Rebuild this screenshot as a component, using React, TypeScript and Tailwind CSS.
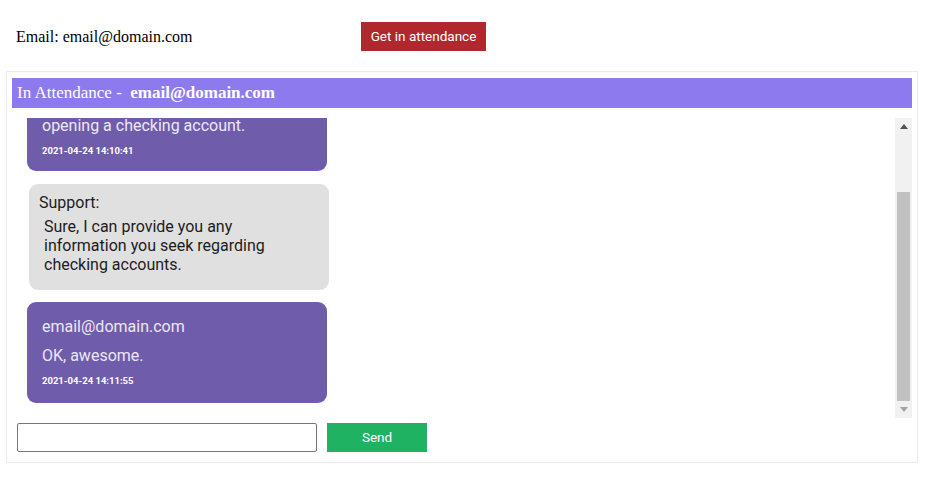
import React from "react";

const roboto = { fontFamily: "Roboto, 'Liberation Sans', sans-serif" };

export default function App() {
  return (
    <div className="w-[928px] h-[478px] bg-white relative overflow-hidden">
      <div className="flex items-center pt-[22px] pl-[16px] h-[29px] box-content">
        <div className="w-[345px] text-[16px] text-black font-['Liberation_Serif',serif]">
          Email: email@domain.com
        </div>
        <button
          className="h-[29px] w-[125px] bg-[#b0282d] text-white text-[13.5px]"
          style={roboto}
        >
          Get in attendance
        </button>
      </div>

      <div className="mt-[20px] ml-[6px] w-[912px] h-[392px] border border-[#ebebeb] pt-[6px] px-[5px] flex flex-col">
        <div className="h-[30px] bg-[#8e7aef] text-white flex items-center pl-[5px] text-[17px] font-['Liberation_Serif',serif] whitespace-pre shrink-0">
          <span>In Attendance -  </span>
          <span className="font-bold">email@domain.com</span>
        </div>

        <div className="mt-[10px] h-[300px] flex shrink-0">
          <div className="flex-1 h-[300px] overflow-hidden flex flex-col justify-end pb-[15px] pl-[15px]" style={roboto}>
            <div className="w-[300px] rounded-[9px] bg-[#6f5dab] text-[#ebe7f5] pt-[15px] px-[15px] pb-[14px] shrink-0">
              <div className="text-[16px] leading-[19px]">email@domain.com</div>
              <div className="mt-[10px] text-[16px] leading-[19px]">
                Hello, I would like some information about
                <br />
                opening a checking account.
              </div>
              <div className="mt-[10px] text-[9.5px] leading-[12px] font-bold text-white">2021-04-24 14:10:41</div>
            </div>

            <div className="mt-[13px] ml-[2px] w-[300px] rounded-[9px] bg-[#e0e0e0] text-[#1c1c1c] pt-[9px] pl-[10px] pr-[20px] pb-[16px] shrink-0">
              <div className="text-[16px] leading-[19px]">Support:</div>
              <div className="mt-[5px] ml-[5px] text-[16px] leading-[19px]">
                Sure, I can provide you any information you seek regarding checking accounts.
              </div>
            </div>

            <div className="mt-[12px] w-[300px] rounded-[9px] bg-[#6f5dab] text-[#ebe7f5] pt-[15px] px-[15px] pb-[16px] shrink-0">
              <div className="text-[16px] leading-[19px]">email@domain.com</div>
              <div className="mt-[10px] text-[16px] leading-[19px]">OK, awesome.</div>
              <div className="mt-[10px] text-[9.5px] leading-[12px] font-bold text-white">2021-04-24 14:11:55</div>
            </div>
          </div>

          <div className="w-[17px] h-[300px] bg-[#f1f1f1] flex flex-col items-center shrink-0">
            <div className="h-[17px] w-full flex items-center justify-center">
              <svg width="8" height="5" viewBox="0 0 8 5"><polygon points="4,0 8,5 0,5" fill="#505050" /></svg>
            </div>
            <div className="h-[57px]" />
            <div className="w-[13px] h-[209px] bg-[#c1c1c1]" />
            <div className="h-[17px] w-full flex items-center justify-center">
              <svg width="8" height="5" viewBox="0 0 8 5"><polygon points="0,0 8,0 4,5" fill="#a3a3a3" /></svg>
            </div>
          </div>
        </div>

        <div className="mt-[5px] pl-[5px] flex gap-[10px]">
          <input className="w-[300px] h-[29px] border border-[#767676] rounded-[2px] outline-none" />
          <button className="w-[100px] h-[29px] bg-[#20b263] text-white text-[13.5px]" style={roboto}>
            Send
          </button>
        </div>
      </div>
    </div>
  );
}
